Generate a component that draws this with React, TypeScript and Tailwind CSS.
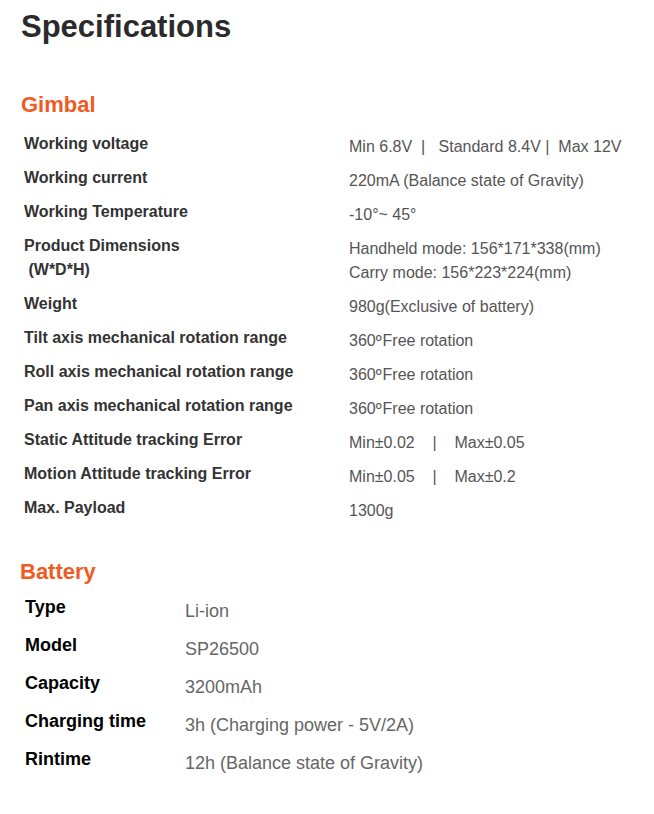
import React from 'react'

const gimbal: [string[], React.ReactNode[]][] = [
  [['Working voltage'], ['Min 6.8V\u00a0 |\u00a0\u00a0 Standard 8.4V |\u00a0 Max 12V']],
  [['Working current'], ['220mA (Balance state of Gravity)']],
  [['Working Temperature'], ['-10°~ 45°']],
  [['Product Dimensions', '\u00a0(W*D*H)'], ['Handheld mode: 156*171*338(mm)', 'Carry mode: 156*223*224(mm)']],
  [['Weight'], ['980g(Exclusive of battery)']],
  [['Tilt axis mechanical rotation range'], [<>360º<span className="ml-[1px]">Free rotation</span></>]],
  [['Roll axis mechanical rotation range'], [<>360º<span className="ml-[1px]">Free rotation</span></>]],
  [['Pan axis mechanical rotation range'], [<>360º<span className="ml-[1px]">Free rotation</span></>]],
  [['Static Attitude tracking Error'], ['Min±0.02\u00a0\u00a0\u00a0 |\u00a0\u00a0\u00a0 Max±0.05']],
  [['Motion Attitude tracking Error'], ['Min±0.05\u00a0\u00a0\u00a0 |\u00a0\u00a0\u00a0 Max±0.2']],
  [['Max. Payload'], ['1300g']],
]

const battery: [string, string][] = [
  ['Type', 'Li-ion'],
  ['Model', 'SP26500'],
  ['Capacity', '3200mAh'],
  ['Charging time', '3h (Charging power - 5V/2A)'],
  ['Rintime', '12h (Balance state of Gravity)'],
]

export default function App() {
  return (
    <div className="w-[654px] min-h-[814px] bg-white font-['Liberation_Sans',Arial,sans-serif]">
      <h1 className="pl-[21px] pt-[9px] text-[31px] leading-[36px] font-bold text-[#2b2b2b]">Specifications</h1>

      <h2 className="mt-[47px] pl-[21px] text-[22px] leading-[26px] font-bold text-[#f05a23]">Gimbal</h2>
      <div className="mt-[9px] pl-[24px]">
        {gimbal.map(([label, value], i) => (
          <div key={i} className="flex items-start py-[5px]">
            <div className="w-[325px] text-[16px] leading-[24px] font-bold text-[#333]">
              {label.map((l, j) => <div key={j}>{l}</div>)}
            </div>
            <div className="mt-[3px] -mb-[3px] text-[16px] leading-[24px] text-[#555]">
              {value.map((v, j) => <div key={j}>{v}</div>)}
            </div>
          </div>
        ))}
      </div>

      <h2 className="mt-[34px] pl-[20px] text-[22px] leading-[26px] font-bold text-[#f05a23]">Battery</h2>
      <div className="mt-[10px] pl-[25px]">
        {battery.map(([label, value], i) => (
          <div key={i} className="flex items-start h-[38px]">
            <div className="w-[160px] text-[18px] leading-[24px] font-bold text-black">{label}</div>
            <div className="mt-[4px] text-[18px] leading-[24px] text-[#666]">{value}</div>
          </div>
        ))}
      </div>
    </div>
  )
}
